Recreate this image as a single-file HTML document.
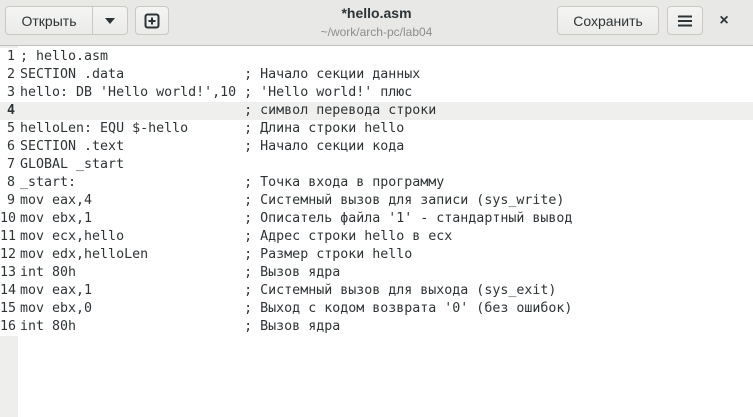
<!DOCTYPE html>
<html><head><meta charset="utf-8"><style>
*{margin:0;padding:0;box-sizing:border-box}
body{width:753px;height:417px;overflow:hidden;background:#fff;font-family:"Liberation Sans","DejaVu Sans",sans-serif;position:relative}
.hdr{position:absolute;left:0;top:0;width:753px;height:46px;background:#e8e8e7;border-bottom:1px solid #c0bfbc}
.btn{position:absolute;top:6px;height:29px;border:1px solid #cdc7c2;border-radius:4px;background:linear-gradient(#f4f4f3,#ebebea);font-size:14px;color:#2e3436;display:flex;align-items:center;justify-content:center}
.title{position:absolute;left:0;width:753px;text-align:center;color:#2e3436}
.gut{position:absolute;left:0;top:46px;width:18px;height:371px;background:#eeeeec}
.code{position:absolute;left:0;top:46px;padding-top:2px;width:753px;font-family:"DejaVu Sans Mono",monospace;font-size:13.3px;color:#2e3436}
.ln{height:18px;line-height:18px;white-space:pre;display:flex;background:#fff}
.ln .n{width:18px;text-align:right;padding-right:3px;color:#2e3436;flex:none}
.ln .t{padding-left:2px}
.cur{background:#efefee}
.cur .n{font-weight:bold}
</style></head><body>
<div class="hdr">
<div class="btn" style="left:5px;width:88px;border-radius:4px 0 0 4px">Открыть</div>
<div class="btn" style="left:92px;width:36px;border-radius:0 4px 4px 0"><svg width="12" height="8"><path d="M1 1h10L6 7z" fill="#2e3436"/></svg></div>
<div class="btn" style="left:135px;width:34px"><svg width="16" height="16"><rect x="1.5" y="1.5" width="13" height="13" rx="2" fill="none" stroke="#2e3436" stroke-width="2"/><path d="M8 4.5v7M4.5 8h7" stroke="#2e3436" stroke-width="2"/></svg></div>
<div class="title" style="top:5px;font-size:14px;font-weight:bold">*hello.asm</div>
<div class="title" style="top:25px;font-size:12px;color:#8b8e8f">~/work/arch-pc/lab04</div>
<div class="btn" style="left:557px;width:102px">Сохранить</div>
<div class="btn" style="left:667px;width:36px"><svg width="14" height="12"><path d="M0 1.5h14M0 6h14M0 10.5h14" stroke="#2e3436" stroke-width="2"/></svg></div>
<div style="position:absolute;left:712px;top:12px;width:24px;text-align:center;font-size:16px;font-weight:bold;color:#2e3436">×</div>
</div>
<div class="gut"></div>
<div class="code">
<div class="ln"><span class="n">1</span><span class="t">; hello.asm</span></div>
<div class="ln"><span class="n">2</span><span class="t">SECTION .data               ; Начало секции данных</span></div>
<div class="ln"><span class="n">3</span><span class="t">hello: DB 'Hello world!',10 ; 'Hello world!' плюс</span></div>
<div class="ln cur"><span class="n">4</span><span class="t">                            ; символ перевода строки</span></div>
<div class="ln"><span class="n">5</span><span class="t">helloLen: EQU $-hello       ; Длина строки hello</span></div>
<div class="ln"><span class="n">6</span><span class="t">SECTION .text               ; Начало секции кода</span></div>
<div class="ln"><span class="n">7</span><span class="t">GLOBAL _start</span></div>
<div class="ln"><span class="n">8</span><span class="t">_start:                     ; Точка входа в программу</span></div>
<div class="ln"><span class="n">9</span><span class="t">mov eax,4                   ; Системный вызов для записи (sys_write)</span></div>
<div class="ln"><span class="n">10</span><span class="t">mov ebx,1                   ; Описатель файла '1' - стандартный вывод</span></div>
<div class="ln"><span class="n">11</span><span class="t">mov ecx,hello               ; Адрес строки hello в ecx</span></div>
<div class="ln"><span class="n">12</span><span class="t">mov edx,helloLen            ; Размер строки hello</span></div>
<div class="ln"><span class="n">13</span><span class="t">int 80h                     ; Вызов ядра</span></div>
<div class="ln"><span class="n">14</span><span class="t">mov eax,1                   ; Системный вызов для выхода (sys_exit)</span></div>
<div class="ln"><span class="n">15</span><span class="t">mov ebx,0                   ; Выход с кодом возврата '0' (без ошибок)</span></div>
<div class="ln"><span class="n">16</span><span class="t">int 80h                     ; Вызов ядра</span></div>
</div>
</body></html>
